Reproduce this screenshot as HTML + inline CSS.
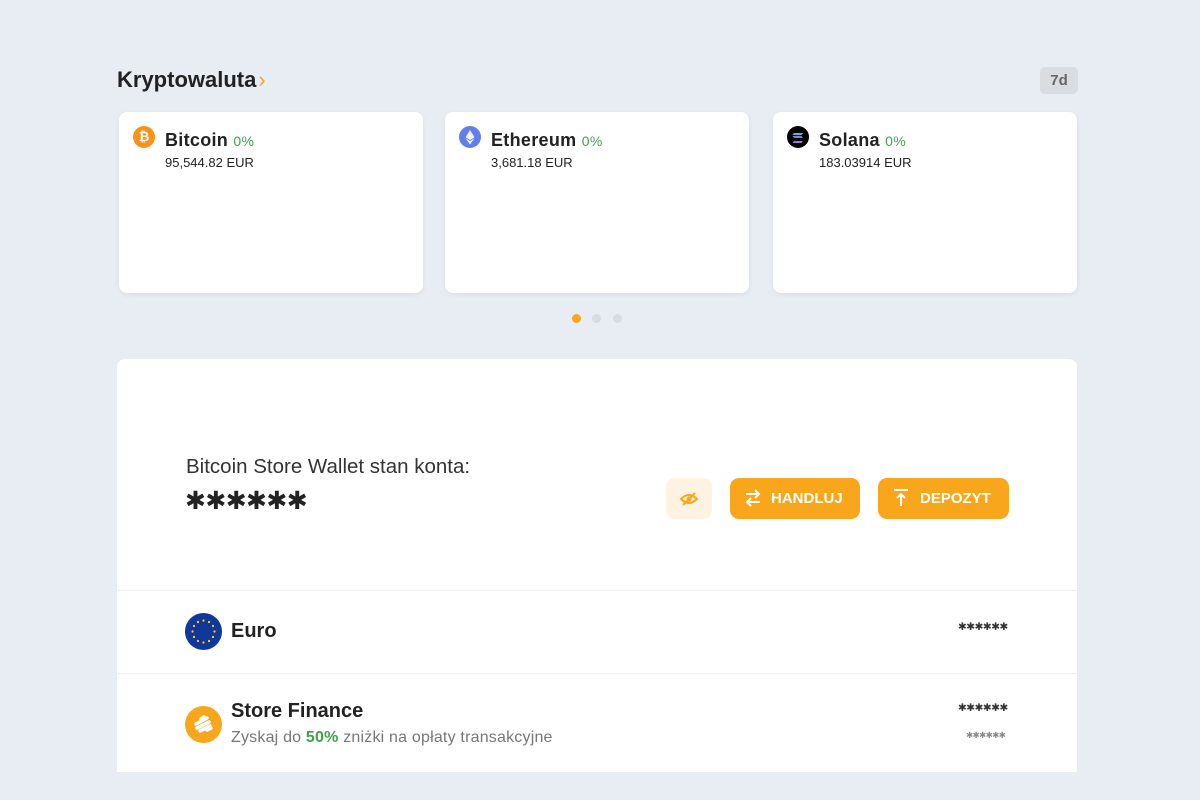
<!DOCTYPE html>
<html><head><style>
*{margin:0;padding:0;box-sizing:border-box}
body{width:1200px;height:800px;background:#e7edf3;font-family:"Liberation Sans",sans-serif;color:#222;position:relative;overflow:hidden}
.abs{position:absolute}
.card{position:absolute;top:112px;width:304px;height:181px;background:#fff;border-radius:8px;box-shadow:0 2px 6px rgba(0,0,0,0.06)}
.ic{position:absolute;left:14px;top:14px;width:22px;height:22px;border-radius:50%}
.nm{position:absolute;left:46px;top:18px;font-size:18px;font-weight:bold;color:#222;letter-spacing:0.3px}
.nm span{color:#3fa34d;font-size:14px;font-weight:normal;margin-left:0}
.pr{position:absolute;left:46px;top:43px;font-size:13px;color:#222}
.btn{position:absolute;top:478px;height:41px;background:#f8a61b;border-radius:9px;color:#fff;font-weight:bold;font-size:15px}
.st{font-family:"DejaVu Sans",sans-serif;font-weight:bold}
</style></head><body>
<div class="abs" style="left:117px;top:67px;font-size:22px;font-weight:bold;color:#222">Kryptowaluta<span style="color:#f8a61b;font-weight:normal;margin-left:2px">&#8250;</span></div>
<div class="abs" style="left:1040px;top:67px;width:38px;height:27px;background:#d9dde1;border-radius:5px;color:#666;font-size:15px;font-weight:bold;text-align:center;line-height:27px">7d</div>

<div class="card" style="left:119px"><div class="ic" style="background:#f7931a;color:#fff;font-size:13px;font-weight:bold;text-align:center;line-height:22px">₿</div><div class="nm">Bitcoin <span>0%</span></div><div class="pr">95,544.82 EUR</div></div>
<div class="card" style="left:445px"><div class="ic" style="background:#627eea"><svg width="22" height="22"><path d="M11 4 L15.5 11.3 L11 14 L6.5 11.3Z" fill="#fff" opacity=".9"/><path d="M11 15 L15.5 12.3 L11 18.5 L6.5 12.3Z" fill="#fff" opacity=".9"/></svg></div><div class="nm">Ethereum <span>0%</span></div><div class="pr">3,681.18 EUR</div></div>
<div class="card" style="left:773px"><div class="ic" style="background:#000"><svg width="22" height="22"><path d="M7 7h9l-1.5 2H5.5zM5.5 10h9l1.5 2H7zM7 15h9l-1.5 2H5.5z" fill="#a06cf0"/><path d="M7 7h9l-1.5 2H5.5z" fill="#2bd5c5"/></svg></div><div class="nm">Solana <span>0%</span></div><div class="pr">183.03914 EUR</div></div>

<div class="abs" style="left:572px;top:314px;width:9px;height:9px;border-radius:50%;background:#f8a61b"></div>
<div class="abs" style="left:592px;top:314px;width:9px;height:9px;border-radius:50%;background:#d8dcdf"></div>
<div class="abs" style="left:613px;top:314px;width:9px;height:9px;border-radius:50%;background:#d8dcdf"></div>

<div class="abs" style="left:117px;top:359px;width:960px;height:413px;background:#fff;border-radius:8px 8px 0 0"></div>
<div class="abs" style="left:186px;top:455px;font-size:20.5px;color:#333">Bitcoin Store Wallet stan konta:</div>
<div class="abs st" style="left:185px;top:486px;font-size:25px;color:#222;letter-spacing:-0.6px">✱✱✱✱✱✱</div>

<div class="abs" style="left:666px;top:478px;width:46px;height:41px;background:#fef3e2;border-radius:9px"><svg width="46" height="41"><path d="M15 21 Q23 13 31 21 Q23 29 15 21Z" fill="none" stroke="#f8a61b" stroke-width="2"/><circle cx="23" cy="21" r="2.5" fill="#f8a61b"/><path d="M17 27 L29 15" stroke="#f8a61b" stroke-width="2"/></svg></div>
<div class="btn" style="left:730px;width:130px"><svg class="abs" style="left:14px;top:11px" width="18" height="18"><path d="M2 5h13M11 1l4 4-4 4M16 13H3M7 9l-4 4 4 4" stroke="#fff" stroke-width="2" fill="none"/></svg><span class="abs" style="left:41px;top:12px">HANDLUJ</span></div>
<div class="btn" style="left:878px;width:131px"><svg class="abs" style="left:14px;top:10px" width="18" height="20"><path d="M2 2h14M9 18V6M5 10l4-4 4 4" stroke="#fff" stroke-width="2" fill="none"/></svg><span class="abs" style="left:42px;top:12px">DEPOZYT</span></div>

<div class="abs" style="left:117px;top:590px;width:960px;height:1px;background:#eef1f3"></div>
<div class="abs" style="left:117px;top:673px;width:960px;height:1px;background:#eef1f3"></div>

<div class="abs" style="left:185px;top:613px;width:37px;height:37px;border-radius:50%;background:#12379a"><svg width="37" height="37"><g fill="#fd0">
<circle cx="18.5" cy="7.5" r="1.1"/><circle cx="24" cy="9" r="1.1"/><circle cx="28" cy="13" r="1.1"/><circle cx="29.5" cy="18.5" r="1.1"/><circle cx="28" cy="24" r="1.1"/><circle cx="24" cy="28" r="1.1"/><circle cx="18.5" cy="29.5" r="1.1"/><circle cx="13" cy="28" r="1.1"/><circle cx="9" cy="24" r="1.1"/><circle cx="7.5" cy="18.5" r="1.1"/><circle cx="9" cy="13" r="1.1"/><circle cx="13" cy="9" r="1.1"/></g></svg></div>
<div class="abs" style="left:231px;top:620px;font-size:20px;font-weight:bold;color:#222">Euro</div>
<div class="abs st" style="left:958px;top:621px;font-size:10.5px;color:#333;letter-spacing:-0.5px">✱✱✱✱✱✱</div>

<div class="abs" style="left:185px;top:706px;width:37px;height:37px;border-radius:50%;background:#f8a61b"><svg width="37" height="37"><g stroke="#fff" stroke-width="3.5" stroke-linecap="round"><path d="M16 13l3-2M11 18l11-6M12 22l12-6M15 25l10-5M22 24l4-2"/></g></svg></div>
<div class="abs" style="left:231px;top:700px;font-size:20px;font-weight:bold;color:#222">Store Finance</div>
<div class="abs" style="left:231px;top:729px;font-size:16px;color:#777;letter-spacing:0.2px">Zyskaj do <b style="color:#3fa34d">50%</b> zniżki na opłaty transakcyjne</div>
<div class="abs st" style="left:958px;top:702px;font-size:10.5px;color:#333;letter-spacing:-0.5px">✱✱✱✱✱✱</div>
<div class="abs st" style="left:966px;top:731px;font-size:8.5px;font-weight:normal;color:#888;letter-spacing:-0.6px">✱✱✱✱✱✱</div>
</body></html>
